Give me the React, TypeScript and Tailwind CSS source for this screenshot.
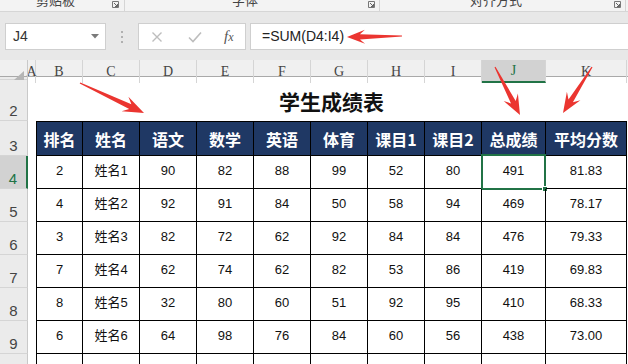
import React from 'react';

const COLS = 'grid grid-cols-[28px_8px_47px_57px_57px_57px_57px_57px_57px_57px_64px_81px_1fr]';
const LETTERS = ['A', 'B', 'C', 'D', 'E', 'F', 'G', 'H', 'I', 'J', 'K'];
const HEADERS = ['排名', '姓名', '语文', '数学', '英语', '体育', '课目1', '课目2', '总成绩', '平均分数'];
const ROWS = [
  ['2', '姓名1', '90', '82', '88', '99', '52', '80', '491', '81.83'],
  ['4', '姓名2', '92', '91', '84', '50', '58', '94', '469', '78.17'],
  ['3', '姓名3', '82', '72', '62', '92', '84', '84', '476', '79.33'],
  ['7', '姓名4', '62', '74', '62', '82', '53', '86', '419', '69.83'],
  ['8', '姓名5', '32', '80', '60', '51', '92', '95', '410', '68.33'],
  ['6', '姓名6', '64', '98', '76', '84', '60', '56', '438', '73.00'],
  ['', '', '', '', '', '', '', '', '', ''],
];

const SANS = "font-['Liberation_Sans','Noto_Sans_CJK_SC',sans-serif]";

function arrowPoints(x1: number, y1: number, x2: number, y2: number, head: number, hw: number) {
  const dx = x2 - x1;
  const dy = y2 - y1;
  const L = Math.hypot(dx, dy);
  const ux = dx / L;
  const uy = dy / L;
  const nx = -uy;
  const ny = ux;
  const p = (t: number, s: number) => `${(x1 + ux * t + nx * s).toFixed(1)},${(y1 + uy * t + ny * s).toFixed(1)}`;
  return [
    p(0, 0.6),
    p(L - head * 0.72, 2.6),
    p(L - head, hw),
    p(L, 0),
    p(L - head, -hw),
    p(L - head * 0.72, -2.6),
    p(0, -0.6),
  ].join(' ');
}

function Launcher() {
  return (
    <svg width="7" height="7" viewBox="0 0 7 7" className="mb-[3px]">
      <path d="M0.5 0.5h6v6" fill="none" stroke="#777" strokeWidth="1" />
      <path d="M0.5 0.5v6h6" fill="none" stroke="#777" strokeWidth="1" />
      <path d="M2 2l3.5 3.5M5.5 3v2.5H3" fill="none" stroke="#555" strokeWidth="0.9" />
    </svg>
  );
}

export default function App() {
  return (
    <div className={`w-[628px] h-[364px] overflow-hidden relative bg-white ${SANS}`}>
      {/* ribbon bottom strip (group labels cut by the window top) */}
      <div className="h-[12px] bg-[#f3f3f3] border-b border-[#d6d6d6] flex overflow-hidden">
        <div className="w-[125px] h-full flex border-r border-[#d5d5d5]">
          <div className="flex-1 pl-[36px] overflow-hidden">
            <div className="-mt-[6px] text-[13px] leading-[13px] text-[#444]">剪贴板</div>
          </div>
          <div className="pr-[5px] flex items-end"><Launcher /></div>
        </div>
        <div className="w-[255px] h-full flex border-r border-[#d5d5d5]">
          <div className="flex-1 pl-[107px] overflow-hidden">
            <div className="-mt-[6px] text-[13px] leading-[13px] text-[#444]">字体</div>
          </div>
          <div className="pr-[4px] flex items-end"><Launcher /></div>
        </div>
        <div className="w-[246px] h-full flex border-r border-[#d5d5d5]">
          <div className="flex-1 pl-[90px] overflow-hidden">
            <div className="-mt-[6px] text-[13px] leading-[13px] text-[#444]">对齐方式</div>
          </div>
          <div className="pr-[4px] flex items-end"><Launcher /></div>
        </div>
      </div>

      {/* formula bar */}
      <div className="h-[48px] bg-[#e8e8e8] flex items-start pt-[11px]">
        <div className="ml-[5px] w-[101px] h-[27px] bg-white border border-[#cfcfcf] flex items-center justify-between pl-[7px] pr-[6px]">
          <span className="text-[14px] text-[#333]">J4</span>
          <svg width="8" height="5" viewBox="0 0 8 5">
            <path d="M0 0h8L4 4.5z" fill="#7a7a7a" />
          </svg>
        </div>
        <div className="w-[32px] h-[27px] flex flex-col items-center justify-center gap-[3px]">
          <span className="w-[2px] h-[2px] bg-[#b0b0b0]" />
          <span className="w-[2px] h-[2px] bg-[#b0b0b0]" />
          <span className="w-[2px] h-[2px] bg-[#b0b0b0]" />
        </div>
        <div className="w-[108px] h-[27px] bg-white border border-[#cfcfcf] flex items-center">
          <svg width="12" height="12" viewBox="0 0 12 12" className="ml-[12px]">
            <path d="M1.5 1.5l9 9M10.5 1.5l-9 9" stroke="#bdbdbd" strokeWidth="1.4" />
          </svg>
          <svg width="14" height="12" viewBox="0 0 14 12" className="ml-[25px]">
            <path d="M1 6.5l4 4L13 1.5" fill="none" stroke="#bdbdbd" strokeWidth="1.6" />
          </svg>
          <span className="ml-[22px] italic font-['Liberation_Serif',serif] text-[15px] text-[#555]">
            f<span className="text-[12px]">x</span>
          </span>
        </div>
        <div className="ml-[4px] flex-1 h-[27px] bg-white border-l border-y border-[#cfcfcf] flex items-center pl-[11px]">
          <span className="text-[14px] text-[#222]">=SUM(D4:I4)</span>
        </div>
      </div>

      {/* column headers */}
      <div className={`${COLS} h-[17px] bg-[#f0f0f0] border-b border-[#a9a9a9]`}>
        <div className="border-r border-[#c9c9c9] relative flex items-end justify-end pr-[3px] pb-[3px]">
          <svg width="10" height="9" viewBox="0 0 10 9">
            <path d="M10 0v9H0z" fill="#b5b5b5" />
          </svg>
        </div>
        {LETTERS.map((l) => (
          <div
            key={l}
            className={`flex items-center justify-center border-r border-[#d5d5d5] font-['Liberation_Serif',serif] text-[14px] ${
              l === 'J' ? 'bg-[#d2d2d2] text-[#217346] border-b-2 border-b-[#217346]' : 'text-[#444]'
            }`}
          >
            {l}
          </div>
        ))}
        <div />
      </div>

      {/* row 1 */}
      <div className={`${COLS} h-[3px]`}>
        <div className="bg-[#ebebeb] border-r border-[#c9c9c9] border-b border-b-[#d5d5d5]" />
      </div>

      {/* row 2: title */}
      <div className={`${COLS} h-[41px]`}>
        <div className="bg-[#ebebeb] border-r border-[#c9c9c9] border-b border-b-[#d5d5d5] flex items-end justify-center pb-[1px] text-[15px] leading-[16px] text-[#444]">
          2
        </div>
        <div />
        <div className="col-span-10 flex items-end justify-center pb-[8px]">
          <span className="font-['Noto_Sans_CJK_SC',sans-serif] font-bold text-[21px] leading-[24px] text-[#111]">学生成绩表</span>
        </div>
      </div>

      {/* row 3: headers */}
      <div className={`${COLS} h-[35px]`}>
        <div className="bg-[#ebebeb] border-r border-[#c9c9c9] border-b border-b-[#d5d5d5] flex items-end justify-center pb-[1px] text-[15px] leading-[16px] text-[#444]">
          3
        </div>
        <div />
        {HEADERS.map((h, i) => (
          <div
            key={h}
            className={`bg-[#1f3864] border-t border-r border-b border-black flex items-center justify-center font-['Noto_Sans_CJK_SC',sans-serif] font-bold text-[16px] text-white ${
              i === 0 ? 'border-l' : ''
            }`}
          >
            {h}
          </div>
        ))}
      </div>

      {/* data rows */}
      {ROWS.map((r, ri) => (
        <div key={ri} className={`${COLS} h-[33px]`}>
          <div
            className={`border-b border-b-[#d5d5d5] flex items-end justify-center pb-[1px] text-[15px] leading-[16px] ${
              ri === 0
                ? 'bg-[#d2d2d2] text-[#217346] border-r-2 border-[#217346]'
                : 'bg-[#ebebeb] text-[#444] border-r border-[#c9c9c9]'
            }`}
          >
            {ri + 4}
          </div>
          <div />
          {r.map((c, ci) => (
            <div
              key={ci}
              className={`relative border-r border-b border-black flex items-center justify-center pb-[2px] text-[13px] text-[#111] ${
                ci === 0 ? 'border-l' : ''
              }`}
            >
              {c}
              {ri === 0 && ci === 8 && (
                <div className="absolute -left-[1px] -top-[2px] -right-[1px] -bottom-[2px] border-2 border-[#217346]">
                  <div className="absolute -right-[4px] -bottom-[4px] w-[6px] h-[6px] bg-[#217346] border border-white" />
                </div>
              )}
            </div>
          ))}
        </div>
      ))}

      {/* red annotation arrows */}
      <svg className="absolute left-0 top-0 pointer-events-none" width="628" height="364" viewBox="0 0 628 364">
        <polygon points={arrowPoints(402, 36, 347, 37, 18, 7)} fill="#eb3530" />
        <polygon points={arrowPoints(80, 83, 144, 113, 21, 8)} fill="#eb3530" />
        <polygon points={arrowPoints(495, 67, 520, 115, 20, 8)} fill="#eb3530" />
        <polygon points={arrowPoints(592, 67, 563, 113, 20, 8)} fill="#eb3530" />
      </svg>
    </div>
  );
}
